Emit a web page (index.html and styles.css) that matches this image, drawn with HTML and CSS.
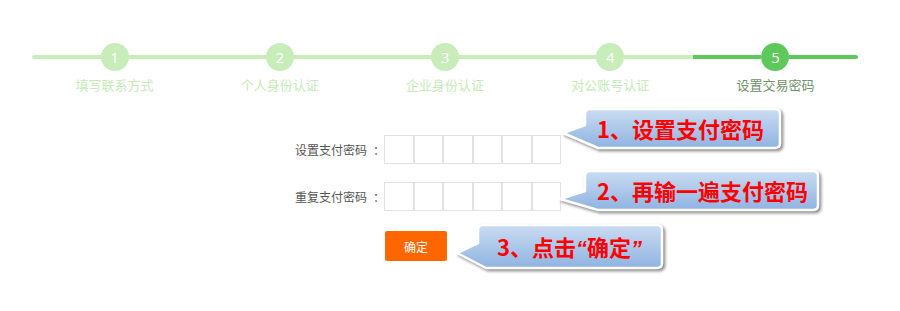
FILE: index.html
```html
<!DOCTYPE html>
<html lang="zh-CN">
<head>
<meta charset="utf-8">
<title>设置交易密码</title>
<link rel="stylesheet" href="styles.css">
</head>
<body>
<div class="page">
  <div class="steps">
    <div class="step first"><div class="track"><span class="dot">1</span></div><div class="label">填写联系方式</div></div>
    <div class="step"><div class="track"><span class="dot">2</span></div><div class="label">个人身份认证</div></div>
    <div class="step"><div class="track"><span class="dot">3</span></div><div class="label">企业身份认证</div></div>
    <div class="step"><div class="track"><span class="dot">4</span></div><div class="label">对公账号认证</div></div>
    <div class="step last active"><div class="track"><span class="dot">5</span></div><div class="label">设置交易密码</div></div>
  </div>

  <div class="form">
    <div class="row">
      <span class="field-label">设置支付密码<span class="colon">：</span></span>
      <div class="pin"><span class="cell"></span><span class="cell"></span><span class="cell"></span><span class="cell"></span><span class="cell"></span><span class="cell"></span></div>
    </div>
    <div class="row">
      <span class="field-label">重复支付密码<span class="colon">：</span></span>
      <div class="pin"><span class="cell"></span><span class="cell"></span><span class="cell"></span><span class="cell"></span><span class="cell"></span><span class="cell"></span></div>
    </div>
    <div class="row btn-row">
      <button class="btn" type="button">确定</button>
    </div>
  </div>

  <div class="callout c1">
    <svg class="bubble" width="230" height="52" viewBox="0 0 230 52">
      <defs><linearGradient id="g1" x1="0" y1="0" x2="0" y2="1"><stop offset="0" stop-color="#cadcf2"/><stop offset="1" stop-color="#8fb3e1"/></linearGradient></defs>
      <path d="M32,5 H217 Q222,5 222,10 V39 Q222,44 217,44 H40 L5,29 L27,21 V10 Q27,5 32,5 Z" fill="url(#g1)" stroke="#fff" stroke-width="2.5" stroke-linejoin="round"/>
    </svg>
    <div class="callout-text">1、设置支付密码</div>
  </div>

  <div class="callout c2">
    <svg class="bubble" width="270" height="52" viewBox="0 0 270 52">
      <defs><linearGradient id="g2" x1="0" y1="0" x2="0" y2="1"><stop offset="0" stop-color="#cadcf2"/><stop offset="1" stop-color="#8fb3e1"/></linearGradient></defs>
      <path d="M35,5 H258 Q263,5 263,10 V39 Q263,44 258,44 H43 L5,33 L30,25 V10 Q30,5 35,5 Z" fill="url(#g2)" stroke="#fff" stroke-width="2.5" stroke-linejoin="round"/>
    </svg>
    <div class="callout-text">2、再输一遍支付密码</div>
  </div>

  <div class="callout c3">
    <svg class="bubble" width="215" height="56" viewBox="0 0 215 56">
      <defs><linearGradient id="g3" x1="0" y1="0" x2="0" y2="1"><stop offset="0" stop-color="#cadcf2"/><stop offset="1" stop-color="#8fb3e1"/></linearGradient></defs>
      <path d="M31,5 H205 Q210,5 210,10 V43 Q210,48 205,48 H34 L5,33 L26,23 V10 Q26,5 31,5 Z" fill="url(#g3)" stroke="#fff" stroke-width="2.5" stroke-linejoin="round"/>
    </svg>
    <div class="callout-text">3、点击<span class="q">“</span>确定<span class="q">”</span></div>
  </div>
</div>
</body>
</html>
```

FILE: styles.css
```css
* { box-sizing: border-box; }

html, body {
  margin: 0;
  padding: 0;
  background: #fff;
}

body {
  font-family: "Noto Sans CJK SC", "Noto Sans", sans-serif;
  width: 900px;
  height: 311px;
  overflow: hidden;
}

.page {
  position: relative;
  width: 900px;
  height: 311px;
  padding-top: 43px;
}

/* ---------- steps ---------- */
.steps {
  display: flex;
  margin-left: 32px;
  width: 826px;
}

.step {
  flex: 1 1 0;
  display: flex;
  flex-direction: column;
  align-items: center;
}

.track {
  width: 100%;
  height: 28px;
  display: flex;
  align-items: center;
}

.track::before,
.track::after {
  content: "";
  flex: 1 1 0;
  height: 4px;
  background: #c8ecba;
}

.first .track::before { border-radius: 2px 0 0 2px; }
.last .track::after { border-radius: 0 2px 2px 0; }

.dot {
  width: 28px;
  height: 28px;
  border-radius: 50%;
  background: #c8ecba;
  color: #fff;
  font-family: "Open Sans", "Noto Sans", sans-serif;
  font-size: 15px;
  line-height: 28px;
  text-align: center;
}

.label {
  margin-top: 6px;
  font-size: 13px;
  line-height: 16px;
  color: #c6eab9;
  white-space: nowrap;
}

.active .track::before,
.active .track::after,
.active .dot {
  background: #5dc95b;
}

.active .label {
  color: #6f9168;
}

/* ---------- form ---------- */
.form {
  margin-top: 42px;
  padding-left: 295px;
  display: flex;
  flex-direction: column;
  gap: 18px;
}

.row {
  display: flex;
  align-items: center;
}

.field-label {
  width: 89px;
  font-size: 12px;
  color: #555;
  white-space: nowrap;
}

.colon {
  margin-left: 6px;
}

.pin {
  display: flex;
}

.cell {
  width: 29.5px;
  height: 29px;
  border: 1px solid #e2e2e2;
  background: #fff;
}

.btn-row {
  margin-top: 2px;
  padding-left: 90px;
}

.btn {
  width: 62px;
  height: 30px;
  border: none;
  border-radius: 2px;
  background: #ff6600;
  color: #fff;
  font-family: "Noto Sans CJK SC", sans-serif;
  font-size: 12px;
  padding: 0;
}

/* ---------- callouts (annotations over the page) ---------- */
.callout {
  position: absolute;
}

.bubble {
  position: absolute;
  left: 0;
  top: 0;
  display: block;
  filter: drop-shadow(2px 2px 1.5px rgba(0, 0, 0, 0.45));
}

.callout-text {
  position: relative;
  font-family: "Noto Sans CJK SC", sans-serif;
  font-weight: 700;
  font-size: 22px;
  color: #ff0000;
  white-space: nowrap;
}

.q {
  font-family: "Liberation Sans", "DejaVu Sans", sans-serif;
  font-style: italic;
}

.c1 { left: 558px; top: 104px; width: 230px; height: 52px; }
.c1 .callout-text { padding: 5px 0 0 39px; line-height: 39px; }

.c2 { left: 555px; top: 166px; width: 270px; height: 52px; }
.c2 .callout-text { padding: 5px 0 0 42px; line-height: 39px; }

.c3 { left: 452px; top: 220px; width: 215px; height: 56px; }
.c3 .callout-text { padding: 5px 0 0 45px; line-height: 43px; }
```
